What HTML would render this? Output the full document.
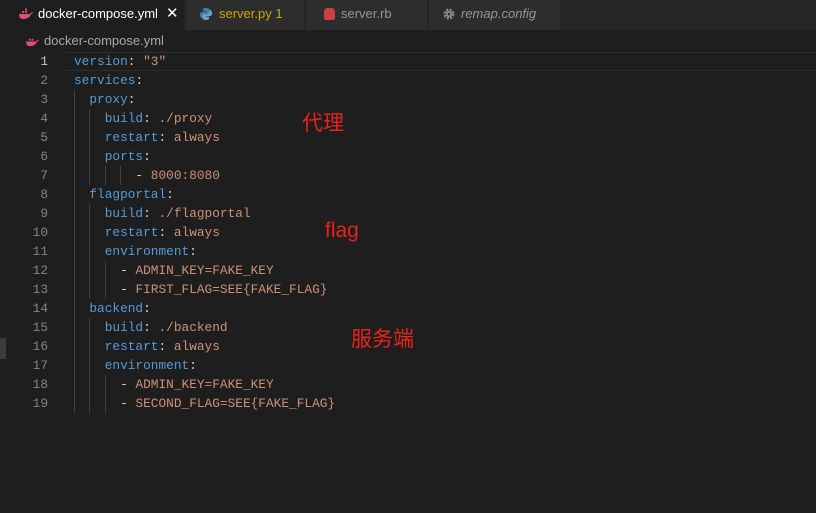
<!DOCTYPE html>
<html><head><meta charset="utf-8"><style>
*{margin:0;padding:0;box-sizing:border-box}
body{width:816px;height:513px;background:#1e1e1e;overflow:hidden;position:relative;font-family:"Liberation Sans","Noto Sans CJK SC",sans-serif}
.tabs{position:absolute;left:0;top:0;width:816px;height:30px;background:#252526}
.tab{position:absolute;top:0;height:30px;background:#2d2d2d;font-size:13px;line-height:28px;color:#969696;border-right:1px solid #252526;white-space:nowrap}
.tab svg{position:absolute;top:8px}
.bc{position:absolute;top:30px;left:0;height:22px;font-size:13px;color:#a9a9a9;line-height:22px}
.code{position:absolute;left:0;top:52px;width:816px;font-family:"Liberation Mono",monospace;font-size:12.8px}
.ln{position:absolute;height:19px;line-height:19px;width:48px;text-align:right;color:#858585;left:0}
.tx{position:absolute;left:74px;height:19px;line-height:19px;white-space:pre;color:#d4d4d4}
.k{color:#569cd6}.v{color:#ce9178}
.g{position:absolute;width:1px;background:#404040}
.red{position:absolute;color:#e8231b;font-size:21px;line-height:22px}
</style></head><body>
<div class="tabs">
 <div class="tab" style="left:0;width:185px;background:#1e1e1e;color:#fff">
  <svg style="left:18px" width="16" height="12" viewBox="0 0 16 12"><path d="M1 6h11c1-2 2-2 3-1.5-.5 1-1 1-2 1.5-1 4-5 5-8 5-3 0-4-2-4-5z" fill="#d9536f"/><rect x="4" y="3" width="2" height="2" fill="#d9536f"/><rect x="7" y="3" width="2" height="2" fill="#d9536f"/><rect x="7" y="0.5" width="2" height="2" fill="#d9536f"/></svg>
  <span style="position:absolute;left:38px">docker-compose.yml</span><span style="position:absolute;left:166px;font-size:15px">✕</span></div>
 <div class="tab" style="left:186px;width:119px">
  <svg style="left:14px" width="12" height="12" viewBox="0 0 12 12"><path d="M6 0C3 0 3 1 3 2v1.5h3v.5H2C0 4 0 6 0 7s.5 3 2 3h1V8c0-1 1-2 2-2h3c1 0 1.5-.5 1.5-1.5V2C9.5 1 8.5 0 6 0z" fill="#3e7bb5"/><path d="M6 12c3 0 3-1 3-2V8.5H6V8h4c2 0 2-2 2-3s-.5-3-2-3H9v2c0 1-1 2-2 2H4c-1 0-1.5.5-1.5 1.5V10c0 1 1 2 3.5 2z" fill="#6aa0c8"/></svg>
  <span style="position:absolute;left:33px;color:#cca700">server.py 1</span></div>
 <div class="tab" style="left:306px;width:122px">
  <svg style="left:18px" width="11" height="12" viewBox="0 0 11 12"><path d="M2 0h7l2 3v8l-2 1H1L0 10V3z" fill="#cc3e44"/></svg>
  <span style="position:absolute;left:35px">server.rb</span></div>
 <div class="tab" style="left:429px;width:132px">
  <svg style="left:14px" width="12" height="12" viewBox="0 0 12 12"><circle cx="6" cy="6" r="4" fill="none" stroke="#8a8a8a" stroke-width="3" stroke-dasharray="2 1.2"/><circle cx="6" cy="6" r="3" fill="#8a8a8a"/><circle cx="6" cy="6" r="1.3" fill="#2d2d2d"/></svg>
  <span style="position:absolute;left:32px;font-style:italic">remap.config</span></div>
</div>
<div class="bc"><svg style="position:absolute;left:25px;top:6px" width="15" height="11" viewBox="0 0 16 12"><path d="M1 6h11c1-2 2-2 3-1.5-.5 1-1 1-2 1.5-1 4-5 5-8 5-3 0-4-2-4-5z" fill="#d9536f"/><rect x="4" y="3" width="2" height="2" fill="#d9536f"/><rect x="7" y="3" width="2" height="2" fill="#d9536f"/></svg><span style="position:absolute;left:44px;white-space:nowrap">docker-compose.yml</span></div>
<div style="position:absolute;left:66px;top:52px;width:750px;height:19px;border-top:1px solid #2e2e2e;border-bottom:1px solid #2e2e2e"></div>
<div class="code">
<div class="g" style="left:74px;top:38px;height:323px"></div>
<div class="g" style="left:89px;top:57px;height:76px"></div>
<div class="g" style="left:105px;top:114px;height:19px"></div>
<div class="g" style="left:120px;top:114px;height:19px"></div>
<div class="g" style="left:89px;top:152px;height:95px"></div>
<div class="g" style="left:105px;top:209px;height:38px"></div>
<div class="g" style="left:89px;top:266px;height:95px"></div>
<div class="g" style="left:105px;top:323px;height:38px"></div>

<div class="ln" style="top:0;color:#c6c6c6">1</div><div class="tx" style="top:0"><span class="k">version</span>: <span class="v">"3"</span></div>
<div class="ln" style="top:19px">2</div><div class="tx" style="top:19px"><span class="k">services</span>:</div>
<div class="ln" style="top:38px">3</div><div class="tx" style="top:38px">  <span class="k">proxy</span>:</div>
<div class="ln" style="top:57px">4</div><div class="tx" style="top:57px">    <span class="k">build</span>: <span class="v">./proxy</span></div>
<div class="ln" style="top:76px">5</div><div class="tx" style="top:76px">    <span class="k">restart</span>: <span class="v">always</span></div>
<div class="ln" style="top:95px">6</div><div class="tx" style="top:95px">    <span class="k">ports</span>:</div>
<div class="ln" style="top:114px">7</div><div class="tx" style="top:114px">        - <span class="v">8000:8080</span></div>
<div class="ln" style="top:133px">8</div><div class="tx" style="top:133px">  <span class="k">flagportal</span>:</div>
<div class="ln" style="top:152px">9</div><div class="tx" style="top:152px">    <span class="k">build</span>: <span class="v">./flagportal</span></div>
<div class="ln" style="top:171px">10</div><div class="tx" style="top:171px">    <span class="k">restart</span>: <span class="v">always</span></div>
<div class="ln" style="top:190px">11</div><div class="tx" style="top:190px">    <span class="k">environment</span>:</div>
<div class="ln" style="top:209px">12</div><div class="tx" style="top:209px">      - <span class="v">ADMIN_KEY=FAKE_KEY</span></div>
<div class="ln" style="top:228px">13</div><div class="tx" style="top:228px">      - <span class="v">FIRST_FLAG=SEE{FAKE_FLAG}</span></div>
<div class="ln" style="top:247px">14</div><div class="tx" style="top:247px">  <span class="k">backend</span>:</div>
<div class="ln" style="top:266px">15</div><div class="tx" style="top:266px">    <span class="k">build</span>: <span class="v">./backend</span></div>
<div class="ln" style="top:285px">16</div><div class="tx" style="top:285px">    <span class="k">restart</span>: <span class="v">always</span></div>
<div class="ln" style="top:304px">17</div><div class="tx" style="top:304px">    <span class="k">environment</span>:</div>
<div class="ln" style="top:323px">18</div><div class="tx" style="top:323px">      - <span class="v">ADMIN_KEY=FAKE_KEY</span></div>
<div class="ln" style="top:342px">19</div><div class="tx" style="top:342px">      - <span class="v">SECOND_FLAG=SEE{FAKE_FLAG}</span></div>
</div>
<div style="position:absolute;left:0;top:338px;width:6px;height:21px;background:#3c3c3c"></div>
<div class="red" style="left:302px;top:113px">代理</div>
<div class="red" style="left:325px;top:220px">flag</div>
<div class="red" style="left:351px;top:329px">服务端</div>
</body></html>
